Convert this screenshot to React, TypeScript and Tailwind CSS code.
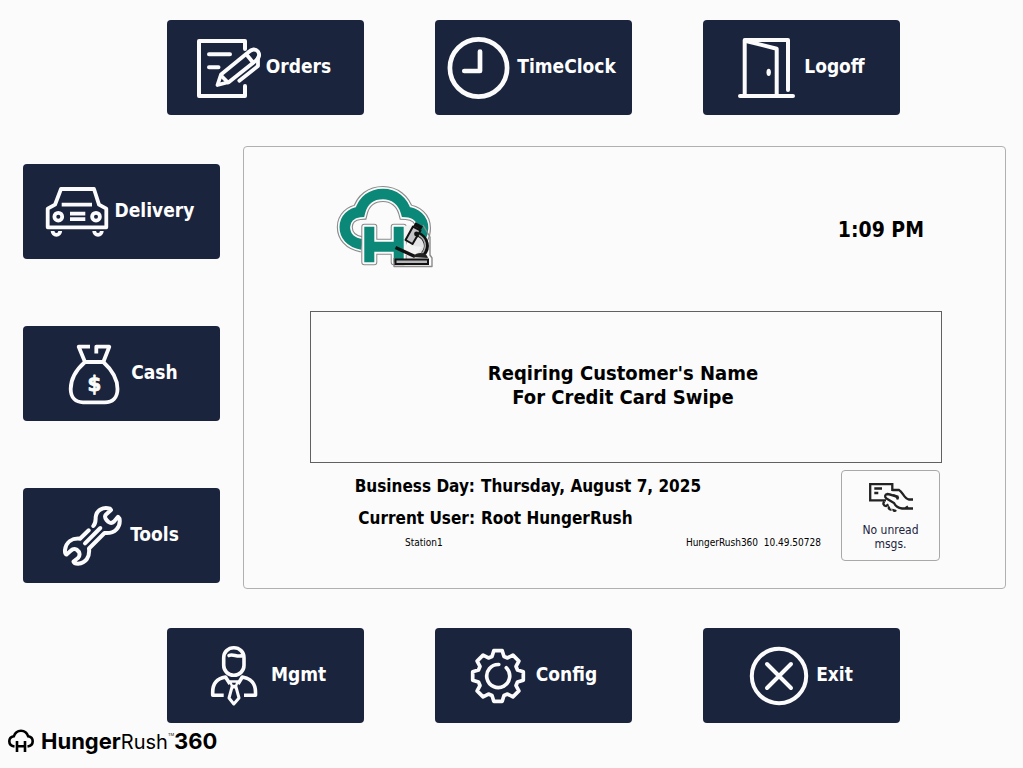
import React from "react";

interface MenuButtonProps {
    label: string;
    children: React.ReactNode;
}

interface IconProps {
    stroke?: number;
    children: React.ReactNode;
}

// one gear tooth is this outline, repeated every 45 degrees
const TOOTH = [[-6, -19.5], [-4.2, -25.3], [4.2, -25.3], [6, -19.5]];

const gearPoints = Array.from({ length: 8 }, (_, i) => {
    const a = (i * Math.PI) / 4;
    return TOOTH.map(([x, y]) => {
        const px = 31 + x * Math.cos(a) - y * Math.sin(a);
        const py = 32 + x * Math.sin(a) + y * Math.cos(a);
        return `${px.toFixed(2)},${py.toFixed(2)}`;
    }).join(" ");
}).join(" ");

function Icon({ stroke = 4, children }: IconProps) {
    return (
        <svg
            viewBox="0 0 64 64"
            className="h-16 w-16 shrink-0 overflow-visible"
            fill="none"
            stroke="#fbfbfb"
            strokeWidth={stroke}
            strokeLinecap="round"
            strokeLinejoin="round"
            aria-hidden="true"
        >
            {children}
        </svg>
    );
}

function MenuButton({ label, children }: MenuButtonProps) {
    return (
        <button
            type="button"
            className="flex h-[95px] w-[197px] shrink-0 cursor-pointer items-center justify-center gap-[5px] rounded bg-[#1b243d] pr-[3px] text-white hover:bg-[#26314f]"
        >
            {children}
            <span className="pb-1 text-[19px] leading-6 font-bold">{label}</span>
        </button>
    );
}

function OrdersIcon() {
    return (
        <Icon>
            <path d="M48 13V5H2V60H48V50" />
            <path d="M12 18.3H33M12 31.3H21.5" />
            <g strokeWidth="3.8">
                <path d="M20.5 49L24 38.5L51 16.5Q57 11 61 15.5Q64 20 59 24.5L32 46Z" />
                <path d="M49.5 18.5L56 26.5M24.5 40L31 46.5M42.3 44.7L61 30V22" />
            </g>
        </Icon>
    );
}

function ClockIcon() {
    return (
        <Icon stroke={4.7}>
            <circle cx="30.5" cy="32" r="28.6" />
            <path d="M32 15.5V35H16.3" />
        </Icon>
    );
}

function DoorIcon() {
    return (
        <Icon>
            <path d="M9.7 60V4H53V54" />
            <path d="M11 5L41.7 12.7V60M5 60H58" />
            <ellipse cx="33.7" cy="36.3" rx="2.2" ry="3.6" fill="#fbfbfb" stroke="none" />
        </Icon>
    );
}

function CarIcon() {
    return (
        <Icon stroke={3.8}>
            <path d="M15 9H48L53 24.7L60.3 28.7V47.3H1.7V28.7L9 24.7Z" />
            <path d="M15.7 24.7H46M24 33.7H39.3M24 39.2H39.3" strokeLinecap="butt" />
            <circle cx="12.3" cy="36.7" r="3.9" />
            <circle cx="50" cy="36.7" r="3.9" />
            <path d="M6.6 51A3.8 3.8 0 0 0 14.2 51M48.2 51A3.8 3.8 0 0 0 55.8 51" strokeLinecap="butt" />
        </Icon>
    );
}

function MoneyBagIcon() {
    return (
        <Icon stroke={3.8}>
            <path d="M28 4.7H16.7L23 20H41.3L47.3 4.7H34.3V11.5" strokeLinecap="butt" />
            <path d="M23 20C15 27 8.7 37 8.7 47C8.7 56 14 60.3 21 60.3H43C50 60.3 55.5 56 55.5 47C55.5 37 49 27 41.3 20" />
            <text
                x="32.3"
                y="49"
                textAnchor="middle"
                fontSize="22"
                fontWeight="bold"
                fill="#fbfbfb"
                stroke="#fbfbfb"
                strokeWidth="0.8"
            >
                $
            </text>
        </Icon>
    );
}

function WrenchIcon() {
    return (
        <Icon stroke={4}>
            <path d="M32.3 22C35 19 34.5 17 34.7 13C35.5 6 42 2.5 49 4.7L50 6L45 10.5C43.5 12 44 14 45.5 16L47.5 18C49.5 19.5 51.5 19 53 17.5L57 12.8L58.5 14.5C60 23 54 30 43.5 29L28 44.5C29 53 25 59 17 59.7C14.5 59.7 13 59 12.5 57.5L17 54C18.5 52.5 18.8 50 18 48L15.5 45.5C13.5 44.5 11.5 45 10 46.5L5.5 50.5C4 50 3.8 48.5 4 46C5 38 11 34 19 34.7L27.7 26.3" />
            <path d="M39.3 24L24 39.3" />
        </Icon>
    );
}

function ManagerIcon() {
    return (
        <Icon stroke={3.6}>
            <rect x="21.7" y="3.7" width="20.3" height="27.6" rx="10" />
            <path d="M27 11.5C31 9.5 35 13.5 41 11.5" />
            <path d="M21.7 51.3H10.7V48C10.7 40 15 34.5 23.5 33L28 40M42 51.3H53.5V48C53.5 40 49 34.5 40.3 33L36 40" strokeLinecap="butt" />
            <path d="M28 37.5H35.7L34 42H30Z" strokeWidth="2.4" />
            <path d="M30 43L27 54L31.8 60L37 54L34 43Z" strokeWidth="3" />
        </Icon>
    );
}

function GearIcon() {
    return (
        <Icon stroke={3.7}>
            <polygon points={gearPoints} />
            <path d="M31.8 20.5A11.5 11.5 0 1 0 39.3 23.8" />
        </Icon>
    );
}

function ExitIcon() {
    return (
        <Icon>
            <circle cx="32" cy="32" r="27.2" />
            <path d="M20 20L44 44M44 20L20 44" />
        </Icon>
    );
}

const CLOUD = "M37 69.5C25 67.5 19.8 60 19.8 52C19.8 44 26 37.5 35 37C38 25 47 19 58 19C69 19 78 26 81 37C91 37.5 98 44 98 53C98 60 95 66 90 68";
const LETTER = "M39.3 51.7H49.3V66.7H68.7V51.7H78.7V87.3H68.7V76.7H49.3V87.3H39.3Z";

function CloudLogo() {
    return (
        <svg viewBox="0 0 120 110" className="ml-[15px] h-[110px] w-[120px] shrink-0" fill="none" role="img" aria-label="HungerRush">
            <path d={CLOUD} stroke="#8a8a8a" strokeWidth="16" />
            <path d={CLOUD} stroke="#fbfbfb" strokeWidth="13.8" />
            <path d={CLOUD} stroke="#0b8878" strokeWidth="10.6" />
            <g strokeLinejoin="round">
                <path d={LETTER} stroke="#8a8a8a" strokeWidth="6" />
                <path d={LETTER} stroke="#fbfbfb" strokeWidth="4" />
            </g>
            <path d={LETTER} fill="#0b8878" />

            {/* microscope */}
            <path d="M98 50L105 62V80L107 83V91.5H69V83" stroke="#8a8a8a" strokeWidth="1.4" strokeLinejoin="round" />
            <path d="M88 64L96 61L102 70V84H82V78Z" fill="#e4e4e6" />
            <path d="M79 68V51L88 50L80 66L82 70L97 72L91 80H80Z" fill="#f2f2f2" />
            <path d="M70.5 72.5L90 81.5" stroke="#111" strokeWidth="3.4" />
            <path d="M93 59C102 63 104 73 98 79" stroke="#111" strokeWidth="5" />
            <path d="M93.5 60C101 64 102 72 97.5 78" stroke="#aaa" strokeWidth="1.6" />
            <path d="M88 82C90 77 101 76 103 83Z" fill="#222" />
            <path d="M88 51.5L95.5 55.5L87.5 69L80.5 65Z" fill="#c4c4c8" stroke="#111" strokeWidth="2" strokeLinejoin="round" />
            <path d="M89.5 49L97 53" stroke="#111" strokeWidth="4" />
            <circle cx="91.5" cy="59" r="2.4" fill="#111" />
            <path d="M70.5 84.5H103V89H70.5Z" fill="#b8b8bc" stroke="#111" strokeWidth="2" />
        </svg>
    );
}

function MessageButton() {
    return (
        <button
            type="button"
            className="mr-0.5 flex h-[91px] w-[99px] shrink-0 cursor-pointer flex-col items-center rounded border border-[#a8a8a8] pt-3 text-xs leading-3.5 text-[#1b243d]"
        >
            <svg viewBox="0 0 44 30" className="mb-2.5 h-[30px] w-11" fill="none" stroke="#222" strokeWidth="2.3" aria-hidden="true">
                <path d="M17 17.3H1.2V1.2H23.3V8" />
                <path d="M5.3 5.5H13M5.3 10H9.3" />
                <path d="M23.3 7H30C34 9 35 16 40 16.5H44" />
                <path d="M29.5 15.5L27 13.5C24 12.5 21 11 18.5 11C15.5 11.5 15.5 14 17.5 15.5L25 20C26.5 23 29 25 33 25.5H44M36 25.5L39 23.5" />
                <path d="M24 12L28.5 13.5V16.5" />
                <path d="M15.5 18.5C13.5 20 14.5 23 17 23L19.5 21.5M20.5 23.5C19 25 20 27 22.5 26.5M24.5 26C24 28 26 28.5 27 27" />
            </svg>
            <span>No unread</span>
            <span>msgs.</span>
        </button>
    );
}

function BrandLogo() {
    return (
        <footer className="mt-1 ml-2 flex h-7 items-center gap-[7px] font-['Inter',sans-serif] text-black">
            <svg viewBox="0 0 26 24" className="h-6 w-[26px] shrink-0" fill="none" stroke="#000" strokeWidth="2.6" aria-hidden="true">
                <path d="M6.5 17.5C3 17 1.3 15 1.3 12.3C1.3 9.5 3 7.8 5.8 7.3C7 3.5 9.5 1.7 13 1.7C16.5 1.7 19 3.5 20.2 7.3C23 7.8 24.7 9.5 24.7 12.3C24.7 15 23 17 19.5 17.5" />
                <path d="M9 12V23M17 12V23M9 17.3H17" />
            </svg>
            <p className="flex items-baseline text-[22px] leading-7">
                <span className="font-bold">Hunger</span>
                <span className="text-xl leading-7">Rush</span>
                <span className="self-start pt-1 text-[4px] leading-2">TM</span>
                <span className="font-bold">360</span>
            </p>
        </footer>
    );
}

export default function App() {
    return (
        <div className="min-h-screen bg-[#fbfbfb] pt-5 font-['DejaVu_Sans_Condensed','DejaVu_Sans',sans-serif] text-black">
            <nav className="flex justify-center gap-[71px] pl-11" aria-label="Station">
                <MenuButton label="Orders"><OrdersIcon /></MenuButton>
                <MenuButton label="TimeClock"><ClockIcon /></MenuButton>
                <MenuButton label="Logoff"><DoorIcon /></MenuButton>
            </nav>

            <div className="mt-[31px] flex gap-[23px] pr-[17px] pl-[23px]">
                <nav className="flex flex-col gap-[67px] pt-[18px] pb-1.5" aria-label="Store">
                    <MenuButton label="Delivery"><CarIcon /></MenuButton>
                    <MenuButton label="Cash"><MoneyBagIcon /></MenuButton>
                    <MenuButton label="Tools"><WrenchIcon /></MenuButton>
                </nav>

                <main className="min-w-0 flex-1 rounded border border-[#b0b0b0] pt-7 pr-[63px] pl-[66px]">
                    <div className="flex items-center justify-between">
                        <CloudLogo />
                        <time className="pr-[18px] text-[21px] leading-6 font-bold">1:09 PM</time>
                    </div>

                    <div className="mt-[26px] border border-[#606060] pt-[49px] pr-1.5 pb-[53px] text-center text-xl leading-6 font-bold">
                        <p>Reqiring Customer's Name</p>
                        <p>For Credit Card Swipe</p>
                    </div>

                    <div className="mt-[7px] flex">
                        <div className="min-w-0 flex-1">
                            <dl className="grid grid-cols-[165px_1fr] gap-x-1.5 text-[17px] leading-8 font-bold whitespace-nowrap">
                                <dt className="text-right">Business Day:</dt>
                                <dd>Thursday, August 7, 2025</dd>
                                <dt className="text-right">Current User:</dt>
                                <dd>Root HungerRush</dd>
                            </dl>
                            <div className="flex justify-between pr-5 pl-[95px] text-[10px] leading-[18px]">
                                <span>Station1</span>
                                <span className="whitespace-pre">HungerRush360  10.49.50728</span>
                            </div>
                        </div>
                        <MessageButton />
                    </div>
                </main>
            </div>

            <nav className="mt-[39px] flex justify-center gap-[71px] pl-11" aria-label="System">
                <MenuButton label="Mgmt"><ManagerIcon /></MenuButton>
                <MenuButton label="Config"><GearIcon /></MenuButton>
                <MenuButton label="Exit"><ExitIcon /></MenuButton>
            </nav>

            <BrandLogo />
        </div>
    );
}
